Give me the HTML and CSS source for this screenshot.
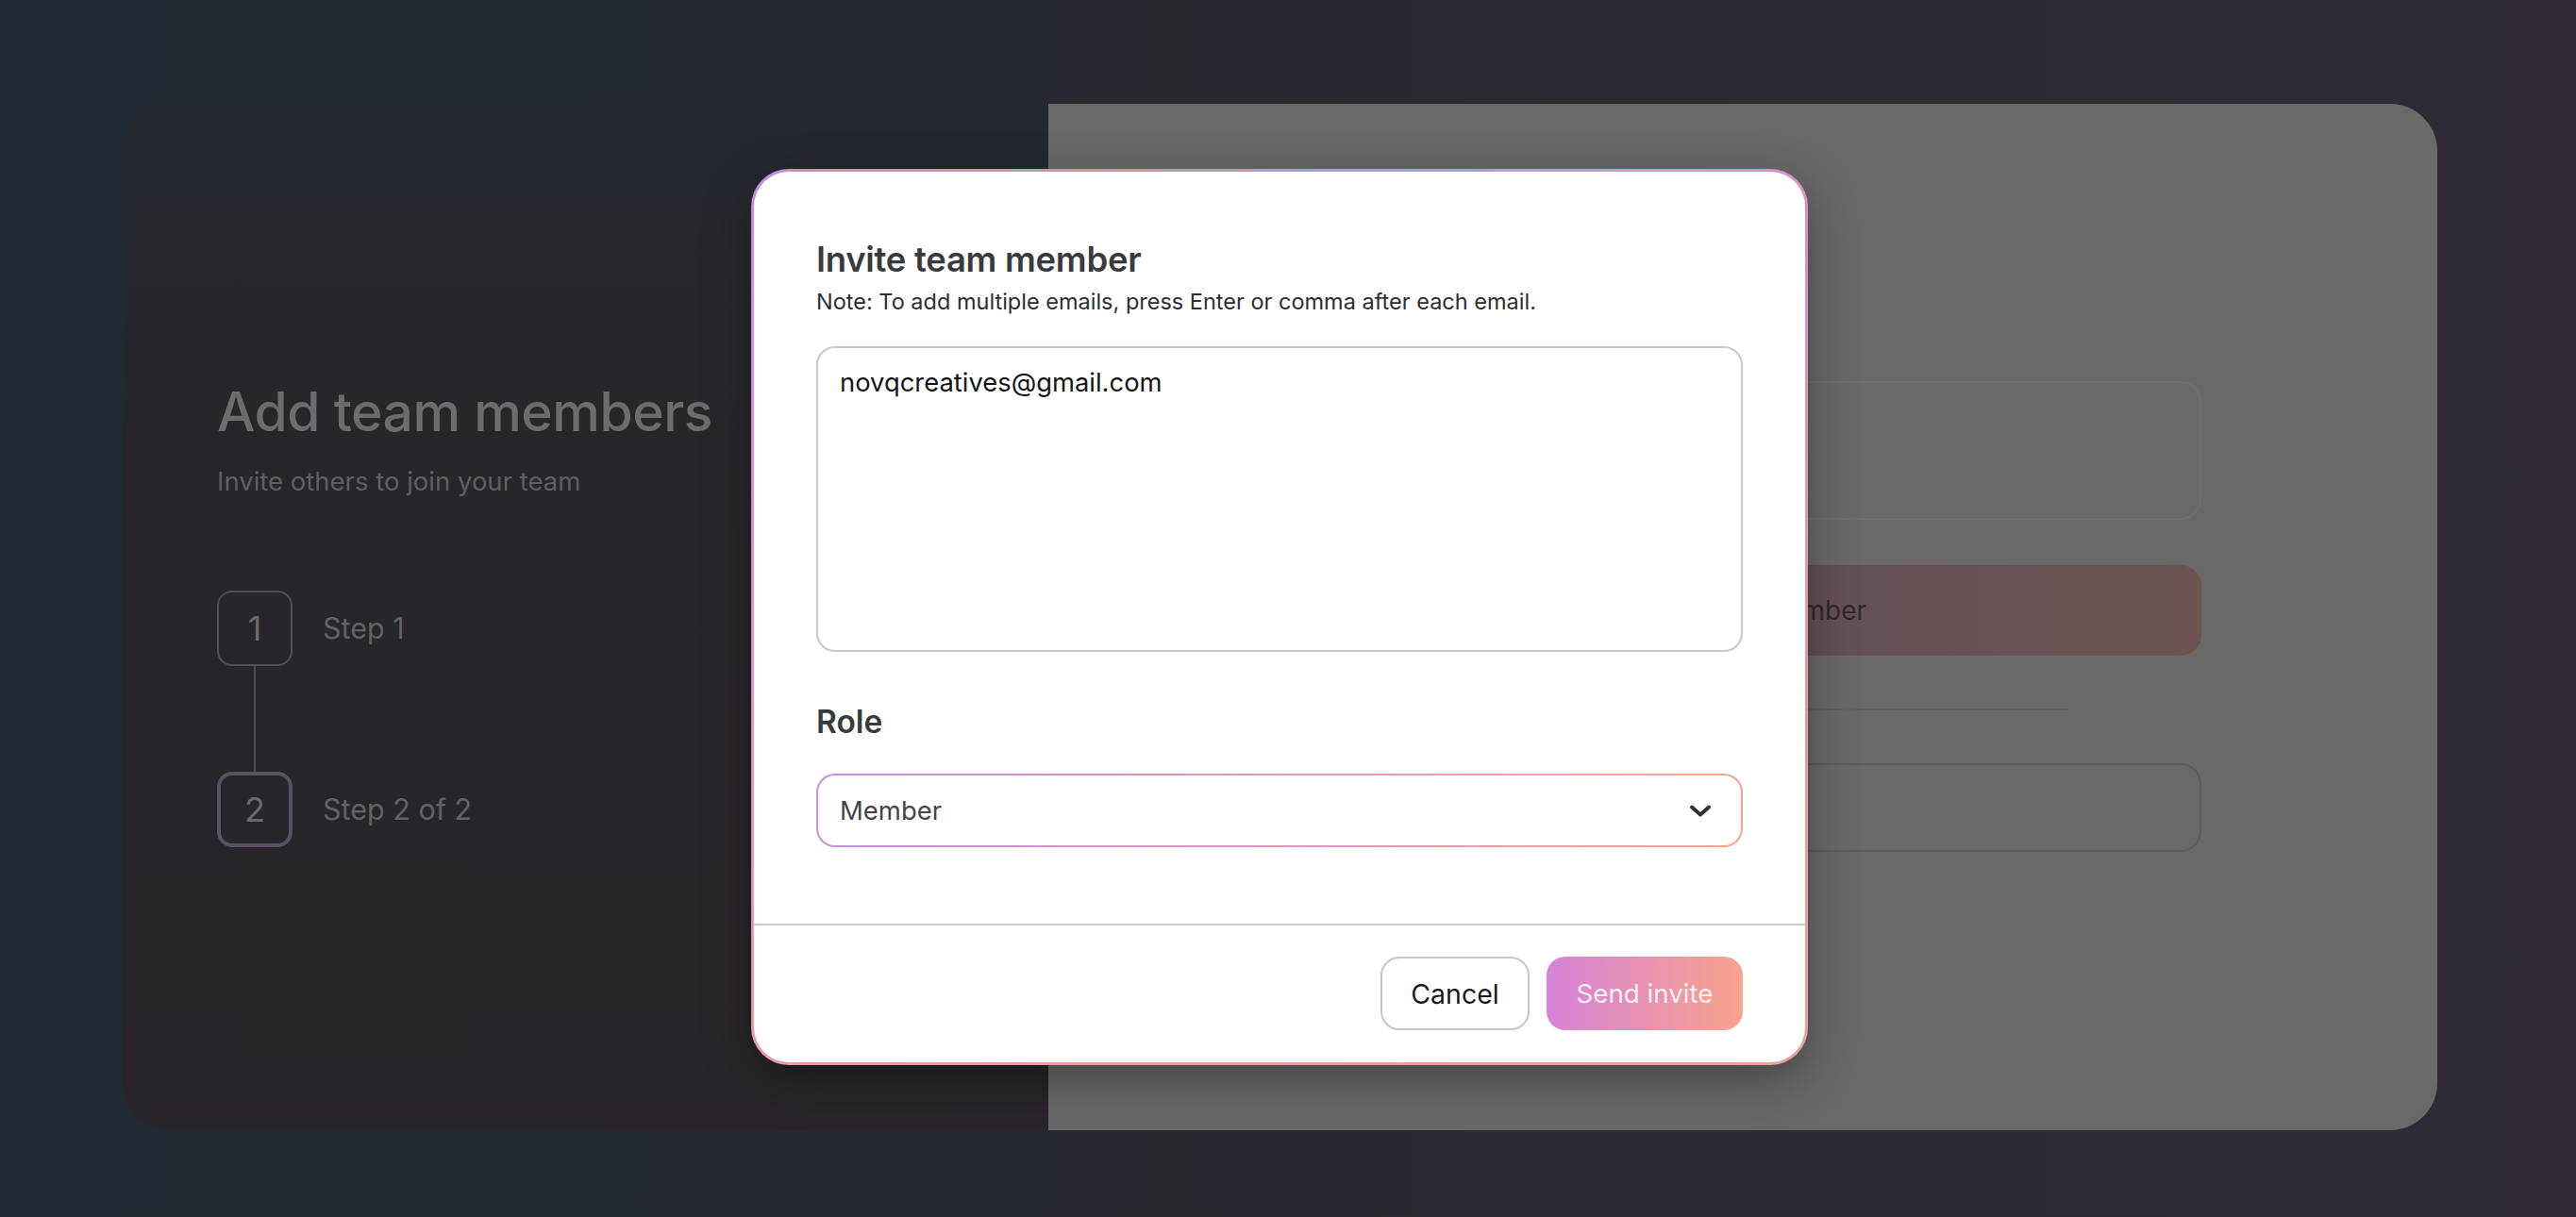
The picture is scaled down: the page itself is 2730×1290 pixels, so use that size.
FILE: index.html
```html
<!DOCTYPE html>
<html lang="en">
<head>
<meta charset="utf-8">
<title>Add team members</title>
<link rel="stylesheet" href="styles.css">
</head>
<body>
<div class="page">
  <div class="card">
    <section class="left">
      <h1 class="left-title">Add team members</h1>
      <p class="left-sub">Invite others to join your team</p>
      <div class="steps">
        <div class="step">
          <div class="step-box">1</div>
          <span class="step-label">Step 1</span>
        </div>
        <div class="step-line"></div>
        <div class="step">
          <div class="step-box step-box-active">2</div>
          <span class="step-label">Step 2 of 2</span>
        </div>
      </div>
    </section>
    <section class="right">
      <div class="right-inner">
        <div class="ghost-input ghost-tall"></div>
        <div class="ghost-button">Invite team member</div>
        <div class="ghost-divider"></div>
        <div class="ghost-input ghost-short"></div>
      </div>
    </section>
  </div>

  <div class="modal">
    <div class="modal-body">
      <h2 class="modal-title">Invite team member</h2>
      <p class="modal-note">Note: To add multiple emails, press Enter or comma after each email.</p>
      <div class="email-box">novqcreatives@gmail.com</div>
      <h3 class="role-label">Role</h3>
      <div class="select">
        <span class="select-value">Member</span>
        <svg class="chevron" width="24" height="15" viewBox="0 0 24 15" fill="none">
          <path d="M3 3.5l9 8 9-8" stroke="#2f3338" stroke-width="4" stroke-linecap="round" stroke-linejoin="round"/>
        </svg>
      </div>
    </div>
    <div class="modal-footer">
      <button class="btn btn-cancel">Cancel</button>
      <button class="btn btn-send">Send invite</button>
    </div>
  </div>
</div>
</body>
</html>
```

FILE: styles.css
```css
* { box-sizing: border-box; }

html, body {
  margin: 0;
  padding: 0;
}

body {
  width: 2730px;
  height: 1290px;
  overflow: hidden;
  font-family: "Inter", "Noto Sans", sans-serif;
  background: linear-gradient(90deg, #212a33 0%, #27292f 45%, #2d2a33 75%, #302b37 100%);
}

.page {
  position: relative;
  width: 2730px;
  height: 1290px;
  padding: 110px 147px 92px 130px;
}

.card {
  display: flex;
  height: 1088px;
  border-radius: 50px;
  overflow: hidden;
}

.left {
  width: 981px;
  background: linear-gradient(180deg, #25292f 0%, #27262a 40%, #29252a 100%);
  display: flex;
  flex-direction: column;
  justify-content: center;
  padding: 0 0 6px 100px;
}

.left-title {
  margin: 0;
  font-size: 57px;
  font-weight: 500;
  line-height: 64px;
  color: #6c6c6e;
  letter-spacing: -0.5px;
}

.left-sub {
  margin: 24px 0 0;
  font-size: 27.5px;
  line-height: 34px;
  color: #5f5f62;
}

.steps {
  margin-top: 99px;
  display: flex;
  flex-direction: column;
}

.step {
  display: flex;
  align-items: center;
  gap: 32px;
}

.step-box {
  width: 80px;
  height: 80px;
  border: 2px solid #504f54;
  border-radius: 16px;
  display: flex;
  align-items: center;
  justify-content: center;
  font-size: 36px;
  color: #6a6a6c;
}

.step-box-active {
  border: 4px solid #5a5166;
}

.step-label {
  font-size: 30.5px;
  color: #626265;
}

.step-line {
  width: 2px;
  height: 112px;
  margin-left: 39px;
  background: #4b4a4f;
}

.right {
  flex: 1;
  background: #696969;
  display: flex;
  justify-content: center;
}

.right-inner {
  width: 972px;
  padding-top: 294px;
  display: flex;
  flex-direction: column;
  align-items: center;
}

.ghost-input {
  width: 100%;
  border: 2px solid #6f6f6f;
  border-radius: 22px;
}

.ghost-tall {
  height: 147px;
}

.ghost-short {
  height: 94px;
  border-color: #5d5d5d;
  margin-top: 56px;
}

.ghost-button {
  width: 100%;
  height: 96px;
  margin-top: 48px;
  border-radius: 22px;
  background: linear-gradient(90deg, #5d4d5e 0%, #644f57 50%, #6a5350 100%);
  color: #2f2a2c;
  font-size: 28px;
  display: flex;
  align-items: center;
  justify-content: center;
}

.ghost-divider {
  width: 690px;
  height: 2px;
  margin-top: 56px;
  background: #606060;
}

/* Modal */
.modal {
  position: absolute;
  left: 796px;
  top: 179px;
  width: 1120px;
  height: 950px;
  border: 3px solid transparent;
  border-radius: 40px;
  background:
    linear-gradient(#ffffff, #ffffff) padding-box,
    linear-gradient(160deg, #c18cdc 0%, #d993c4 35%, #e59aa7 65%, #eba29c 100%) border-box;
  box-shadow: 0 16px 50px rgba(0, 0, 0, 0.35);
  display: flex;
  flex-direction: column;
}

.modal-body {
  flex: 1;
  padding: 73px 66px 0;
}

.modal-title {
  margin: 0;
  font-size: 36.5px;
  line-height: 41px;
  font-weight: 600;
  color: #3a3a3c;
  letter-spacing: -0.3px;
}

.modal-note {
  margin: 9px 0 0;
  font-size: 23.5px;
  line-height: 29px;
  color: #2e2e30;
}

.email-box {
  margin-top: 33px;
  height: 324px;
  border: 2px solid #c9c9cb;
  border-radius: 20px;
  padding: 19px 23px;
  font-size: 27.4px;
  line-height: 35px;
  color: #151515;
}

.role-label {
  margin: 54px 0 0;
  font-size: 33.5px;
  line-height: 41px;
  font-weight: 600;
  color: #3a3a3c;
}

.select {
  margin-top: 34px;
  height: 78px;
  border: 2px solid transparent;
  border-radius: 20px;
  background:
    linear-gradient(#ffffff, #ffffff) padding-box,
    linear-gradient(90deg, #c392d6 0%, #d79ac0 50%, #f0a78f 100%) border-box;
  display: flex;
  align-items: center;
  justify-content: space-between;
  padding: 0 31px 0 23px;
}

.select-value {
  font-size: 27.5px;
  color: #444446;
}

.chevron {
  display: block;
}

.modal-footer {
  border-top: 2px solid #cbcbcd;
  padding: 33px 66px 34px;
  display: flex;
  justify-content: flex-end;
  gap: 18px;
}

.btn {
  height: 78px;
  border-radius: 20px;
  font-family: inherit;
  cursor: pointer;
}

.btn-cancel {
  width: 158px;
  background: #ffffff;
  border: 2px solid #c6c6c8;
  color: #1a1a1a;
  font-size: 28.5px;
}

.btn-send {
  width: 208px;
  border: none;
  background: linear-gradient(90deg, #d583db 0%, #e792b0 50%, #f8a48c 100%);
  color: rgba(255, 255, 255, 0.88);
  font-size: 27.7px;
}
```
